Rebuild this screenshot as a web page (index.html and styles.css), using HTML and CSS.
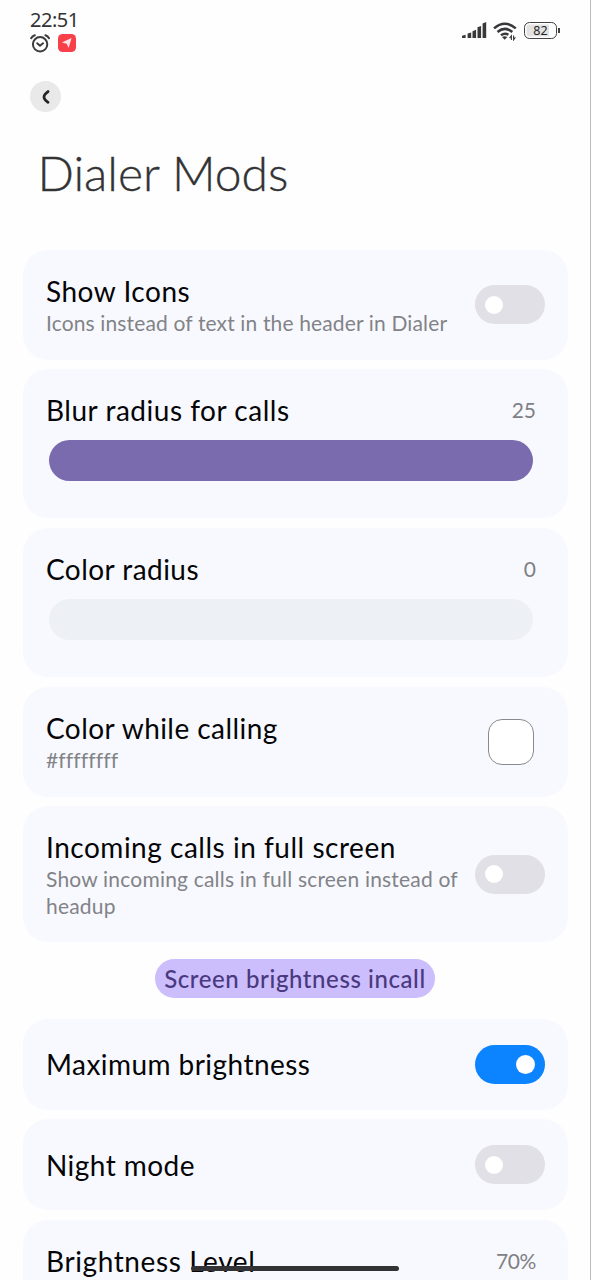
FILE: index.html
```html
<!DOCTYPE html>
<html lang="en">
<head>
<meta charset="utf-8">
<title>Dialer Mods</title>
<link rel="stylesheet" href="styles.css">
</head>
<body>
<div class="screen">
  <header class="status">
    <div class="status-left">
      <div class="clock">22:51</div>
      <div class="notifications">
        <svg class="alarm" width="20" height="19" viewBox="0 0 20 19" fill="none" stroke="#3c3c3e" stroke-width="2" stroke-linecap="round" stroke-linejoin="round"><circle cx="10.1" cy="10.3" r="7.2"/><path d="M1.2 4.1Q2.5 2 4.8 1.2M19 4.1Q17.7 2 15.4 1.2M7.2 9.3L10 11.8L13 9.3"/></svg>
        <svg width="18" height="18" viewBox="0 0 18 18"><rect width="18" height="18" rx="4.6" fill="#f8404a"/><path d="M3.8 8.4L13.6 4.1L10.6 14L8.7 9.8Z" fill="#fde3e2"/></svg>
      </div>
    </div>
    <div class="status-right">
      <svg width="25" height="17" viewBox="0 0 25 17" fill="#38383a"><path d="M0 13.8L3.6 12.8V16H0zM5.6 11.6L9.2 10.4V16H5.6zM10.5 9.2L14.1 7.7V16H10.5zM15.5 5.3L19.1 3.9V16H15.5zM20.6 1.5L24.2 .1V16H20.6z"/></svg>
      <svg class="wifi" width="24" height="19" viewBox="0 0 24 19" fill="none" stroke="#38383a" stroke-width="2.5"><path d="M1 6.4Q11.8-3 22.8 6.4M4.5 10Q11.8 3.8 19.3 10M8 13.3Q11.8 10.4 15.4 12.8"/><path d="M9 15.1Q11.7 13.4 14.3 15.1L11.7 17.7Z" fill="#38383a" stroke="none"/><path d="M18.4 18V13.8L16.6 16.2M20.6 13.6V17.8L22.4 15.2" stroke-width="1.1"/></svg>
      <div class="battery"><span class="battery-body">82</span><span class="battery-tip"></span></div>
    </div>
  </header>

  <button class="back" aria-label="Back"><svg width="10" height="14" viewBox="0 0 10 14" fill="none" stroke="#242426" stroke-width="2.8" stroke-linecap="round" stroke-linejoin="round"><path d="M7 1.6C4.8 3.2 3 5.3 3 7C3 8.7 4.8 10.7 7 12.3"/></svg></button>
  <h1 class="heading">Dialer Mods</h1>

  <main class="list">
    <section class="card">
      <div class="label"><div class="title show-icons">Show Icons</div><div class="summary">Icons instead of text in the header in Dialer</div></div>
      <span class="switch"></span>
    </section>
    <section class="card slider-card">
      <div class="slider-head"><div class="title blur">Blur radius for calls</div><span class="value">25</span></div>
      <div class="track full"></div>
    </section>
    <section class="card slider-card">
      <div class="slider-head"><div class="title color-radius">Color radius</div><span class="value">0</span></div>
      <div class="track"></div>
    </section>
    <section class="card">
      <div class="label"><div class="title calling">Color while calling</div><div class="summary hex">#ffffffff</div></div>
      <span class="swatch"></span>
    </section>
    <section class="card tall">
      <div class="label"><div class="title incoming">Incoming calls in full screen</div><div class="summary long">Show incoming calls in full screen instead of<br>headup</div></div>
      <span class="switch"></span>
    </section>
    <div class="chip">Screen brightness incall</div>
    <section class="card single">
      <div class="title maximum">Maximum brightness</div>
      <span class="switch on"></span>
    </section>
    <section class="card single">
      <div class="title night">Night mode</div>
      <span class="switch"></span>
    </section>
    <section class="card slider-card last">
      <div class="slider-head"><div class="title level">Brightness Level</div><span class="value percent">70%</span></div>
    </section>
  </main>
  <div class="home-bar"></div>
</div>
</body>
</html>
```

FILE: styles.css
```css
* { box-sizing: border-box; }
body { margin: 0; background: #fff; font-family: Lato, "Open Sans", sans-serif; }
.screen { position: relative; width: 591px; height: 1280px; overflow: hidden; background: #fefefe; border-right: 1px solid #bcbcbe; }

.status { display: flex; justify-content: space-between; height: 81px; padding: 9px 30px 0; }
.clock { font: 20px/21px "Noto Sans", sans-serif; color: #343436; letter-spacing: -.5px; white-space: nowrap; }
.notifications { display: flex; gap: 8px; margin-top: 4px; }
.status-right { display: flex; align-items: flex-start; padding-top: 13px; }
.wifi { margin: 0 7px 0 6px; }
.battery { display: flex; align-items: center; gap: 1px; }
.battery-body { width: 33px; height: 17px; border: 1.5px solid #414143; border-radius: 5.5px; background: linear-gradient(90deg, #e2e2e3 78%, #fefefe 78%); font: 12.5px/15px "Noto Sans", sans-serif; text-align: center; color: #242426; box-shadow: inset 0 0 0 1.5px #fefefe; }
.battery-tip { width: 2px; height: 5px; background: #414143; }

.back { display: grid; place-items: center; width: 31px; height: 31px; margin: 0 0 0 30px; padding: 0; border: 0; border-radius: 50%; background: #e9e9e9; }
.heading { margin: 31px 0 0 37.5px; font-size: 48px; font-weight: 300; line-height: 60px; color: #333335; -webkit-text-stroke: .35px #333335; white-space: nowrap; }

.list { display: flex; flex-direction: column; gap: 9.3px; margin: 46.7px 22px 0 23px; }
.card { flex: none; display: flex; align-items: center; justify-content: space-between; height: 110px; padding: 0 23px; border-radius: 25px; background: #f8f9fe; }
.label { height: 61px; }
.title { font-size: 28px; line-height: 34px; color: #050507; letter-spacing: .45px; white-space: nowrap; }
.show-icons, .blur, .incoming { letter-spacing: .52px; }
.level { letter-spacing: .6px; }
.summary { padding-top: 1px; font-size: 21px; line-height: 27px; color: #828387; letter-spacing: .14px; white-space: nowrap; }
.long { letter-spacing: .2px; }
.tall { height: 136.5px; }
.tall .label { height: 88px; }
.single { height: 91px; }
.slider-card { flex-direction: column; align-items: stretch; justify-content: flex-start; height: 149.5px; padding-top: 24.4px; }
.slider-head { display: flex; justify-content: space-between; padding-right: 9px; }
.value { font-size: 21px; line-height: 34px; color: #7f8084; }
.percent { letter-spacing: -.4px; }
.track { height: 41px; margin: 12.6px 12px 0 3px; border-radius: 21px; background: #edf0f5; }
.track.full { background: #7a6bae; }
.last { margin-top: .4px; }

.switch { flex: none; display: flex; align-items: center; width: 70px; height: 39px; padding: 0 10px; border-radius: 20px; background: #e1e0e6; }
.switch::before { content: ""; width: 18px; height: 18px; border-radius: 50%; background: #fff; }
.switch.on { justify-content: flex-end; background: #0c84ff; }
.switch.on::before { width: 19px; height: 19px; }
.swatch { width: 46px; height: 46px; margin-right: 11px; border: 1px solid #8a8a8e; border-radius: 14px; background: #fff; }
.chip { align-self: center; width: 280px; height: 39px; margin: 7.3px 1px 11.6px 0; border-radius: 20px; background: #ccbdfd; color: #4a397f; font-size: 24px; font-weight: 500; line-height: 39px; letter-spacing: .58px; text-align: center; white-space: nowrap; }
.home-bar { position: absolute; left: 191px; top: 1266px; width: 208px; height: 5px; border-radius: 3px; background: #333336; }
```
